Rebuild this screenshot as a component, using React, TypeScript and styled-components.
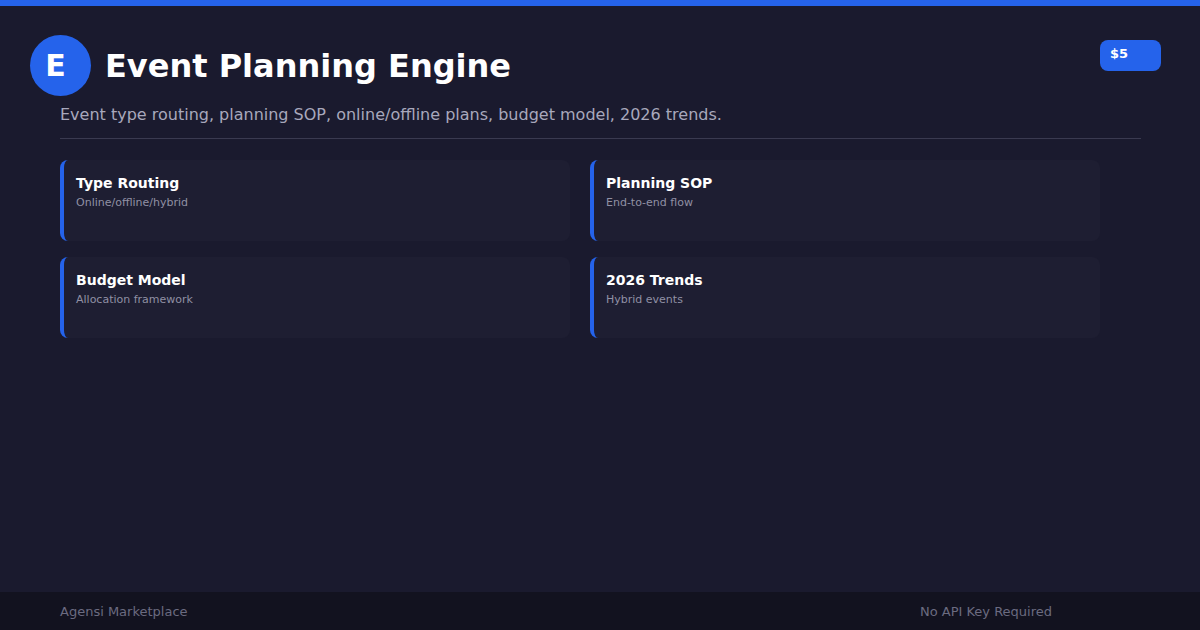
import styled, { createGlobalStyle } from 'styled-components';

const Global = createGlobalStyle`
    html, body { margin: 0; padding: 0; }
    body {
        width: 1200px;
        height: 630px;
        overflow: hidden;
        background: #1a1a2e;
        font-family: 'DejaVu Sans', sans-serif;
    }
`;

const Page = styled.div`
    width: 1200px;
    height: 630px;
    display: flex;
    flex-direction: column;
    border-top: 6px solid #2563eb;
    box-sizing: border-box;
`;

const Main = styled.div`
    flex: 1;
    padding: 29px 39px 0 30px;
    position: relative;
`;

const Header = styled.div`
    display: flex;
    align-items: center;
    gap: 14px;
`;

const Avatar = styled.div`
    width: 61px;
    height: 61px;
    border-radius: 50%;
    background: #2563eb;
    color: #ffffff;
    font-size: 30px;
    font-weight: 700;
    display: flex;
    align-items: center;
    justify-content: center;
    padding-right: 10px;
    box-sizing: border-box;
`;

const Title = styled.h1`
    margin: 0;
    font-size: 32px;
    font-weight: 700;
    color: #ffffff;
`;

const Price = styled.div`
    position: absolute;
    top: 34px;
    right: 39px;
    width: 61px;
    height: 31px;
    box-sizing: border-box;
    padding: 6px 10px;
    border-radius: 8px;
    background: #2563eb;
    color: #ffffff;
    font-size: 13px;
    font-weight: 700;
`;

const Body = styled.div`
    padding-left: 30px;
`;

const Subtitle = styled.p`
    margin: 8px 0 0;
    font-size: 16px;
    color: #a8a8bc;
    line-height: 22px;
    padding-bottom: 12px;
    border-bottom: 1px solid #3a3a50;
    margin-right: 20px;
    padding-left: 0;
`;

const Grid = styled.div`
    display: grid;
    grid-template-columns: 510px 510px;
    column-gap: 20px;
    row-gap: 16px;
    margin-top: 21px;
`;

const Card = styled.div`
    height: 81px;
    box-sizing: border-box;
    background: #1e1e32;
    border-left: 4px solid #2563eb;
    border-radius: 8px;
    padding: 14px 12px;
`;

const CardTitle = styled.div`
    font-size: 14px;
    font-weight: 700;
    color: #ffffff;
    line-height: 18px;
`;

const CardDesc = styled.div`
    margin-top: 4px;
    font-size: 11px;
    color: #9090a4;
    line-height: 14px;
`;

const Footer = styled.div`
    height: 38px;
    background: #12121f;
    display: flex;
    align-items: center;
    padding: 0 60px;
    font-size: 13px;
    color: #6b6b80;
`;

const FooterRight = styled.span`
    margin-left: auto;
    margin-right: 88px;
`;

const cards = [
    { title: 'Type Routing', desc: 'Online/offline/hybrid' },
    { title: 'Planning SOP', desc: 'End-to-end flow' },
    { title: 'Budget Model', desc: 'Allocation framework' },
    { title: '2026 Trends', desc: 'Hybrid events' },
];

export default function App() {
    return (
        <>
            <Global />
            <Page>
                <Main>
                    <Header>
                        <Avatar>E</Avatar>
                        <Title>Event Planning Engine</Title>
                    </Header>
                    <Price>$5</Price>
                    <Body>
                        <Subtitle>Event type routing, planning SOP, online/offline plans, budget model, 2026 trends.</Subtitle>
                        <Grid>
                            {cards.map((c) => (
                                <Card key={c.title}>
                                    <CardTitle>{c.title}</CardTitle>
                                    <CardDesc>{c.desc}</CardDesc>
                                </Card>
                            ))}
                        </Grid>
                    </Body>
                </Main>
                <Footer>
                    <span>Agensi Marketplace</span>
                    <FooterRight>No API Key Required</FooterRight>
                </Footer>
            </Page>
        </>
    );
}
